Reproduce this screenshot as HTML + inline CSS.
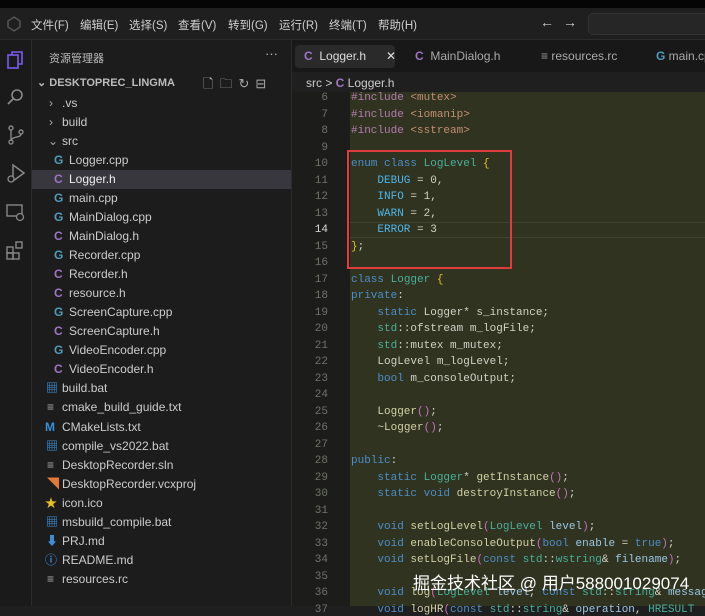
<!DOCTYPE html>
<html><head><meta charset="utf-8"><style>
*{margin:0;padding:0;box-sizing:border-box}
body{width:705px;height:606px;overflow:hidden;background:#1f1f1f;font-family:"Liberation Sans","Noto Sans CJK SC",sans-serif;color:#ccc;position:relative}
.a{position:absolute}
.top{left:0;top:0;width:705px;height:8px;background:#050505}
.menu{left:0;top:8px;width:705px;height:32px;background:#1f1f1f;border-bottom:1px solid #2b2b2b}
.menu span{position:absolute;top:9px;font-size:11.5px;color:#cfcfcf}
.act{left:0;top:40px;width:32px;height:566px;background:#1a1a1a;border-right:1px solid #2b2b2b}
.side{left:32px;top:40px;width:259px;height:566px;background:#1c1c1c}
.row{position:absolute;left:32px;width:259px;height:19px;font-size:12px;line-height:19px;color:#cccccc;white-space:nowrap}
.row i{position:absolute;font-style:normal;font-weight:bold;font-size:12px}
.c{color:#a074c4}
.cp{color:#519aba}
.gut{left:292px;top:92px;width:58px;height:514px;background:#1c1d1b}
.code{left:350px;top:92px;width:355px;height:514px;background:#2f3320}
.ln{position:absolute;left:292px;width:36px;text-align:right;font-family:"Liberation Mono",monospace;font-size:11px;color:#6e7468;margin-top:2px}
.cl{position:absolute;left:351px;font-family:"Liberation Mono",monospace;font-size:11px;color:#d2d2c4;white-space:pre;margin-top:2px}
.k{color:#4d8ec8}.t{color:#4ab09a}.e{color:#4fb4e8}.f{color:#d2d2a6}.v{color:#9cc8e4}.p{color:#b67cb0}.s{color:#c48f74}.y{color:#e6c020}.pa{color:#c870c0}
</style></head><body>
<div class="a top"></div>
<div class="a menu">
<svg class="a" style="left:6px;top:8px" width="16" height="16"><path d="M8 1L14 5V11L8 15L2 11V5Z" fill="none" stroke="#555" stroke-width="1.5"/></svg>
<span style="left:31px">文件(F)</span><span style="left:80px">编辑(E)</span><span style="left:129px">选择(S)</span><span style="left:178px">查看(V)</span><span style="left:228px">转到(G)</span><span style="left:279px">运行(R)</span><span style="left:329px">终端(T)</span><span style="left:378px">帮助(H)</span>
<span style="left:540px;top:6px;font-size:14px">←</span><span style="left:563px;top:6px;font-size:14px">→</span>
<div class="a" style="left:588px;top:5px;width:130px;height:22px;border-radius:5px;background:#262626;border:1px solid #333"></div>
</div>
<div class="a act">
<svg class="a" style="left:5px;top:10px" width="22" height="22"><rect x="3" y="5" width="10" height="13" fill="none" stroke="#7a5cf0" stroke-width="1.6"/><path d="M7 5V2H17V14H13" fill="none" stroke="#7a5cf0" stroke-width="1.6"/></svg>
<svg class="a" style="left:5px;top:46px" width="22" height="22"><circle cx="12" cy="9" r="5" fill="none" stroke="#888" stroke-width="1.6"/><path d="M8 13L3 18" stroke="#888" stroke-width="1.8"/></svg>
<svg class="a" style="left:5px;top:84px" width="22" height="22"><circle cx="6" cy="4" r="2" fill="none" stroke="#888" stroke-width="1.4"/><circle cx="6" cy="18" r="2" fill="none" stroke="#888" stroke-width="1.4"/><circle cx="16" cy="8" r="2" fill="none" stroke="#888" stroke-width="1.4"/><path d="M6 6V16M16 10C16 14 8 12 6 16" fill="none" stroke="#888" stroke-width="1.4"/></svg>
<svg class="a" style="left:5px;top:122px" width="22" height="22"><path d="M8 3L19 11L8 19Z" fill="none" stroke="#888" stroke-width="1.5"/><circle cx="6" cy="17" r="3" fill="#1a1a1a" stroke="#888" stroke-width="1.3"/></svg>
<svg class="a" style="left:5px;top:162px" width="22" height="22"><rect x="2" y="3" width="15" height="11" fill="none" stroke="#888" stroke-width="1.4"/><circle cx="15" cy="15" r="3.5" fill="#1a1a1a" stroke="#888" stroke-width="1.3"/></svg>
<svg class="a" style="left:5px;top:199px" width="22" height="22"><rect x="2" y="8" width="6" height="6" fill="none" stroke="#888" stroke-width="1.4"/><rect x="2" y="14" width="6" height="6" fill="none" stroke="#888" stroke-width="1.4"/><rect x="8" y="14" width="6" height="6" fill="none" stroke="#888" stroke-width="1.4"/><rect x="11" y="3" width="6" height="6" fill="none" stroke="#888" stroke-width="1.4"/></svg>
</div>
<div class="a side"></div>
<div class="a" style="left:49px;top:50px;font-size:11px;color:#bbb">资源管理器</div>
<div class="a" style="left:265px;top:46px;font-size:13px;color:#bbb">···</div>
<div class="a" style="left:37px;top:76px;font-size:11px;font-weight:bold;color:#bbb">⌄ DESKTOPREC_LINGMA</div>
<div class="a" style="left:203px;top:75px;font-size:13px;color:#aaa;letter-spacing:6px">🗋🗀↻⊟</div>
<div class="a" style="left:32px;top:170px;width:259px;height:19px;background:#37373d"></div>
<div class="row" style="top:94px"><span style="position:absolute;left:17px;color:#aaa">›</span><span style="position:absolute;left:30px">.vs</span></div>
<div class="row" style="top:113px"><span style="position:absolute;left:17px;color:#aaa">›</span><span style="position:absolute;left:30px">build</span></div>
<div class="row" style="top:132px"><span style="position:absolute;left:16px;color:#aaa">⌄</span><span style="position:absolute;left:30px">src</span></div>
<div class="row" style="top:151px"><i class="cp" style="left:22px">G</i><span style="position:absolute;left:37px">Logger.cpp</span></div>
<div class="row" style="top:170px"><i class="c" style="left:22px">C</i><span style="position:absolute;left:37px;color:#eee">Logger.h</span></div>
<div class="row" style="top:189px"><i class="cp" style="left:22px">G</i><span style="position:absolute;left:37px">main.cpp</span></div>
<div class="row" style="top:208px"><i class="cp" style="left:22px">G</i><span style="position:absolute;left:37px">MainDialog.cpp</span></div>
<div class="row" style="top:227px"><i class="c" style="left:22px">C</i><span style="position:absolute;left:37px">MainDialog.h</span></div>
<div class="row" style="top:246px"><i class="cp" style="left:22px">G</i><span style="position:absolute;left:37px">Recorder.cpp</span></div>
<div class="row" style="top:265px"><i class="c" style="left:22px">C</i><span style="position:absolute;left:37px">Recorder.h</span></div>
<div class="row" style="top:284px"><i class="c" style="left:22px">C</i><span style="position:absolute;left:37px">resource.h</span></div>
<div class="row" style="top:303px"><i class="cp" style="left:22px">G</i><span style="position:absolute;left:37px">ScreenCapture.cpp</span></div>
<div class="row" style="top:322px"><i class="c" style="left:22px">C</i><span style="position:absolute;left:37px">ScreenCapture.h</span></div>
<div class="row" style="top:341px"><i class="cp" style="left:22px">G</i><span style="position:absolute;left:37px">VideoEncoder.cpp</span></div>
<div class="row" style="top:360px"><i class="c" style="left:22px">C</i><span style="position:absolute;left:37px">VideoEncoder.h</span></div>
<div class="row" style="top:379px"><i style="left:14px;color:#3b8fd6">▦</i><span style="position:absolute;left:30px">build.bat</span></div>
<div class="row" style="top:398px"><i style="left:15px;color:#aaa">≡</i><span style="position:absolute;left:30px">cmake_build_guide.txt</span></div>
<div class="row" style="top:418px"><i style="left:13px;color:#3b8fd6">M</i><span style="position:absolute;left:30px">CMakeLists.txt</span></div>
<div class="row" style="top:437px"><i style="left:14px;color:#3b8fd6">▦</i><span style="position:absolute;left:30px">compile_vs2022.bat</span></div>
<div class="row" style="top:456px"><i style="left:15px;color:#aaa">≡</i><span style="position:absolute;left:30px">DesktopRecorder.sln</span></div>
<div class="row" style="top:475px"><i style="left:15px;color:#e37933">◥</i><span style="position:absolute;left:30px">DesktopRecorder.vcxproj</span></div>
<div class="row" style="top:494px"><i style="left:13px;color:#e6c020">★</i><span style="position:absolute;left:30px">icon.ico</span></div>
<div class="row" style="top:513px"><i style="left:14px;color:#3b8fd6">▦</i><span style="position:absolute;left:30px">msbuild_compile.bat</span></div>
<div class="row" style="top:532px"><i style="left:14px;color:#3b8fd6">⬇</i><span style="position:absolute;left:30px">PRJ.md</span></div>
<div class="row" style="top:551px"><i style="left:13px;color:#3b8fd6">ⓘ</i><span style="position:absolute;left:30px">README.md</span></div>
<div class="row" style="top:570px"><i style="left:15px;color:#aaa">≡</i><span style="position:absolute;left:30px">resources.rc</span></div>
<div class="a" style="left:291px;top:40px;width:1px;height:566px;background:#2b2b2b"></div>
<!-- tabs -->
<div class="a" style="left:292px;top:40px;width:413px;height:32px;background:#181818"></div>
<div class="a" style="left:295px;top:45px;width:100px;height:23px;background:#2a2a2a;border-radius:4px"></div>
<div class="a" style="left:304px;top:49px;font-size:12px;color:#ddd;white-space:nowrap"><b class="c">C</b>&nbsp; Logger.h&nbsp;&nbsp;&nbsp;&nbsp;&nbsp; ✕</div>
<div class="a" style="left:415px;top:49px;font-size:12px;color:#aaa;white-space:nowrap"><b class="c">C</b>&nbsp; MainDialog.h</div>
<div class="a" style="left:541px;top:49px;font-size:12px;color:#aaa;white-space:nowrap"><span style="color:#999">≡</span> resources.rc</div>
<div class="a" style="left:656px;top:49px;font-size:12px;color:#aaa;white-space:nowrap"><b class="cp">G</b> main.cpp</div>
<div class="a" style="left:292px;top:72px;width:413px;height:20px;background:#1f1f1f;z-index:2"></div>
<div class="a" style="left:306px;top:76px;font-size:12px;color:#ccc;z-index:3">src &gt; <b class="c">C</b> Logger.h</div>
<div class="a gut"></div><div class="a code"></div>
<div class="a" style="left:350px;top:222px;width:355px;height:16px;border-top:1px solid #3e4230;border-bottom:1px solid #3e4230"></div>
<div class="ln" style="top:90px">6</div><div class="cl" style="top:90px"><span class="p">#include</span> <span class="s">&lt;mutex&gt;</span></div>
<div class="ln" style="top:106.5px">7</div><div class="cl" style="top:106.5px"><span class="p">#include</span> <span class="s">&lt;iomanip&gt;</span></div>
<div class="ln" style="top:123px">8</div><div class="cl" style="top:123px"><span class="p">#include</span> <span class="s">&lt;sstream&gt;</span></div>
<div class="ln" style="top:139.5px">9</div>
<div class="ln" style="top:156px">10</div><div class="cl" style="top:156px"><span class="k">enum class</span> <span class="t">LogLevel</span> <span class="y">{</span></div>
<div class="ln" style="top:172.5px">11</div><div class="cl" style="top:172.5px">    <span class="e">DEBUG</span> = 0,</div>
<div class="ln" style="top:189px">12</div><div class="cl" style="top:189px">    <span class="e">INFO</span> = 1,</div>
<div class="ln" style="top:205.5px">13</div><div class="cl" style="top:205.5px">    <span class="e">WARN</span> = 2,</div>
<div class="ln" style="top:222px;color:#ddd">14</div><div class="cl" style="top:222px">    <span class="e">ERROR</span> = 3</div>
<div class="ln" style="top:238.5px">15</div><div class="cl" style="top:238.5px"><span class="y">}</span>;</div>
<div class="ln" style="top:255px">16</div>
<div class="ln" style="top:271.5px">17</div><div class="cl" style="top:271.5px"><span class="k">class</span> <span class="t">Logger</span> <span class="y">{</span></div>
<div class="ln" style="top:288px">18</div><div class="cl" style="top:288px"><span class="k">private</span>:</div>
<div class="ln" style="top:304.5px">19</div><div class="cl" style="top:304.5px">    <span class="k">static</span> Logger* s_instance;</div>
<div class="ln" style="top:321px">20</div><div class="cl" style="top:321px">    <span class="t">std</span>::ofstream m_logFile;</div>
<div class="ln" style="top:337.5px">21</div><div class="cl" style="top:337.5px">    <span class="t">std</span>::mutex m_mutex;</div>
<div class="ln" style="top:354px">22</div><div class="cl" style="top:354px">    LogLevel m_logLevel;</div>
<div class="ln" style="top:370.5px">23</div><div class="cl" style="top:370.5px">    <span class="k">bool</span> m_consoleOutput;</div>
<div class="ln" style="top:387px">24</div>
<div class="ln" style="top:403.5px">25</div><div class="cl" style="top:403.5px">    <span class="f">Logger</span><span class="pa">()</span>;</div>
<div class="ln" style="top:420px">26</div><div class="cl" style="top:420px">    ~<span class="f">Logger</span><span class="pa">()</span>;</div>
<div class="ln" style="top:436.5px">27</div>
<div class="ln" style="top:453px">28</div><div class="cl" style="top:453px"><span class="k">public</span>:</div>
<div class="ln" style="top:469.5px">29</div><div class="cl" style="top:469.5px">    <span class="k">static</span> <span class="t">Logger</span>* <span class="f">getInstance</span><span class="pa">()</span>;</div>
<div class="ln" style="top:486px">30</div><div class="cl" style="top:486px">    <span class="k">static void</span> <span class="f">destroyInstance</span><span class="pa">()</span>;</div>
<div class="ln" style="top:502.5px">31</div>
<div class="ln" style="top:519px">32</div><div class="cl" style="top:519px">    <span class="k">void</span> <span class="f">setLogLevel</span><span class="pa">(</span><span class="t">LogLevel</span> <span class="v">level</span><span class="pa">)</span>;</div>
<div class="ln" style="top:535.5px">33</div><div class="cl" style="top:535.5px">    <span class="k">void</span> <span class="f">enableConsoleOutput</span><span class="pa">(</span><span class="k">bool</span> <span class="v">enable</span> = <span class="k">true</span><span class="pa">)</span>;</div>
<div class="ln" style="top:552px">34</div><div class="cl" style="top:552px">    <span class="k">void</span> <span class="f">setLogFile</span><span class="pa">(</span><span class="k">const</span> <span class="t">std</span>::<span class="t">wstring</span>&amp; <span class="v">filename</span><span class="pa">)</span>;</div>
<div class="ln" style="top:568.5px">35</div>
<div class="ln" style="top:585px">36</div><div class="cl" style="top:585px">    <span class="k">void</span> <span class="f">log</span><span class="pa">(</span><span class="t">LogLevel</span> <span class="v">level</span>, <span class="k">const</span> <span class="t">std</span>::<span class="t">string</span>&amp; <span class="v">message</span></div>
<div class="ln" style="top:601.5px">37</div><div class="cl" style="top:601.5px">    <span class="k">void</span> <span class="f">logHR</span><span class="pa">(</span><span class="k">const</span> <span class="t">std</span>::<span class="t">string</span>&amp; <span class="v">operation</span>, <span class="t">HRESULT</span></div>
<div class="a" style="left:347px;top:150px;width:165px;height:119px;border:2px solid #e03c3c"></div>
<div class="a" style="left:413px;top:569px;font-size:17px;color:#fff;white-space:nowrap">掘金技术社区 @ 用户588001029074</div>
</body></html>
